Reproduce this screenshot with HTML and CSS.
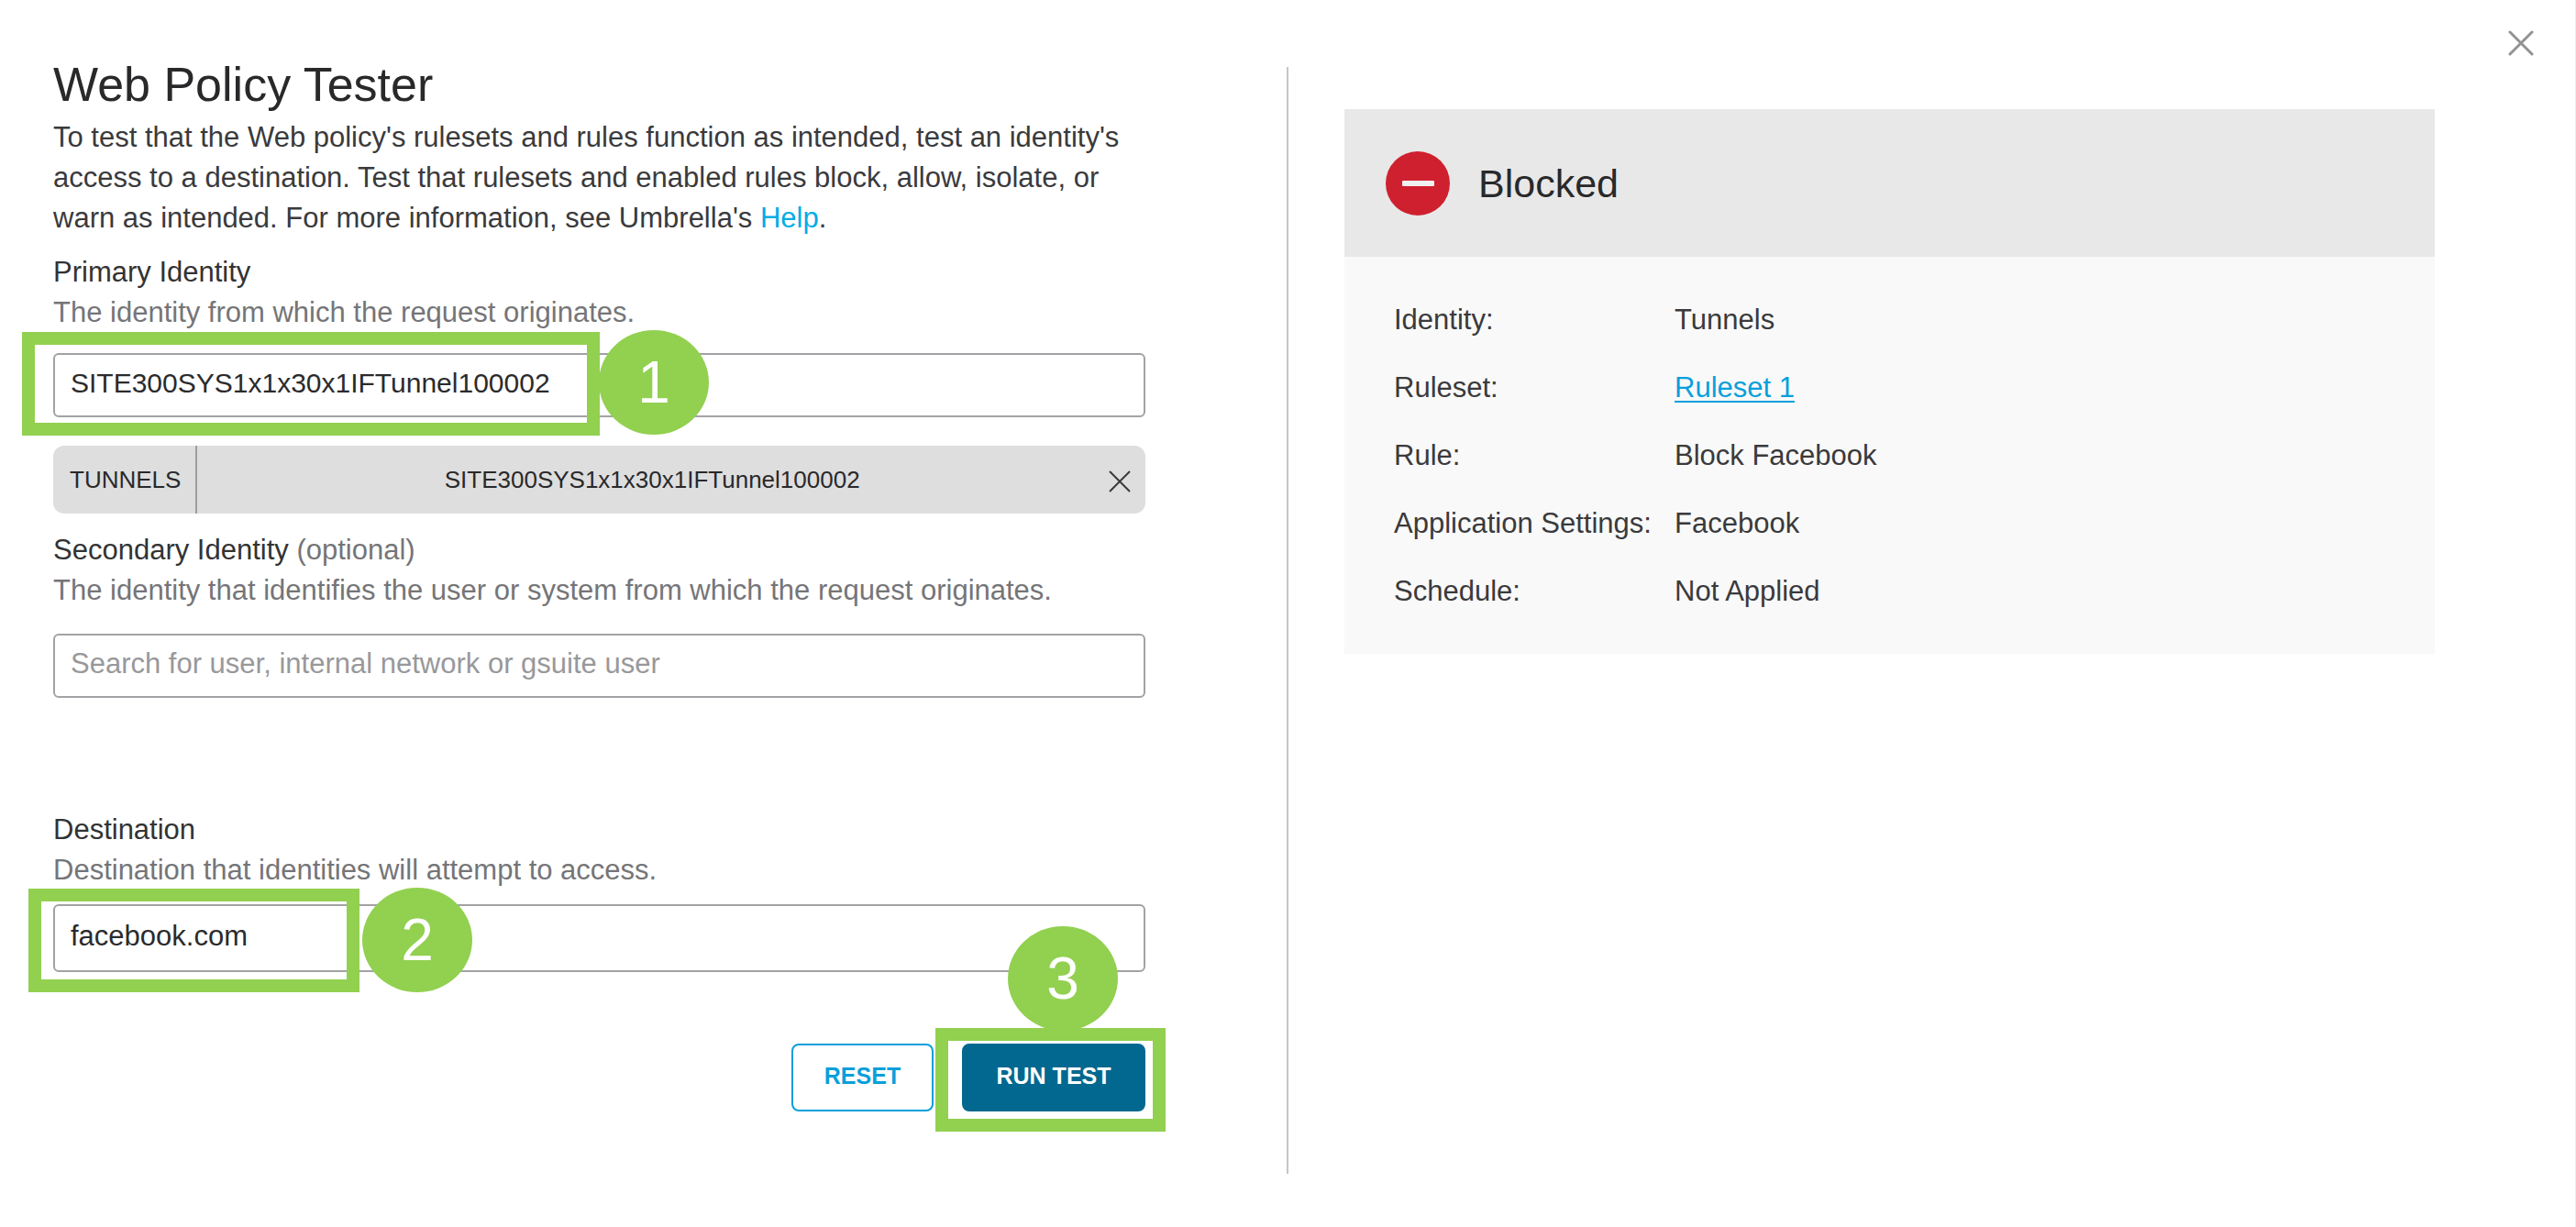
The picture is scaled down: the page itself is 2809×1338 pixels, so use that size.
FILE: index.html
```html
<!DOCTYPE html>
<html lang="en">
<head>
<meta charset="utf-8">
<meta name="viewport" content="width=device-width, initial-scale=1">
<title>Web Policy Tester</title>
<link rel="stylesheet" href="styles.css">
</head>
<body>
<main class="dialog">
  <form class="tester">
    <h1 class="title">Web Policy Tester</h1>
    <p class="intro">To test that the Web policy's rulesets and rules function as intended, test an identity's access to a destination. Test that rulesets and enabled rules block, allow, isolate, or warn as intended. For more information, see Umbrella's <a class="help-link" href="#help">Help</a>.</p>

    <div class="field">
      <label class="label" for="primary">Primary Identity</label>
      <p class="hint" id="primary-hint">The identity from which the request originates.</p>
      <div class="control">
        <input class="input input-identity" id="primary" type="text" value="SITE300SYS1x1x30x1IFTunnel100002" aria-describedby="primary-hint">
        <span class="outline outline-primary"></span>
        <span class="step step-primary">1</span>
      </div>
      <div class="chip">
        <span class="chip-type">TUNNELS</span>
        <span class="chip-name">SITE300SYS1x1x30x1IFTunnel100002</span>
        <button class="chip-remove" type="button" aria-label="Remove identity">
          <svg width="24" height="24" viewBox="0 0 24 24" fill="none" stroke="currentColor" stroke-width="2"><path d="M1 1l22 22M23 1L1 23"/></svg>
        </button>
      </div>
    </div>

    <div class="field field-secondary">
      <label class="label" for="secondary">Secondary Identity <span class="optional">(optional)</span></label>
      <p class="hint" id="secondary-hint">The identity that identifies the user or system from which the request originates.</p>
      <div class="control">
        <input class="input" id="secondary" type="text" placeholder="Search for user, internal network or gsuite user" aria-describedby="secondary-hint">
      </div>
    </div>

    <div class="field field-destination">
      <label class="label" for="destination">Destination</label>
      <p class="hint" id="destination-hint">Destination that identities will attempt to access.</p>
      <div class="control">
        <input class="input" id="destination" type="text" value="facebook.com" aria-describedby="destination-hint">
        <span class="outline outline-destination"></span>
        <span class="step step-destination">2</span>
      </div>
    </div>

    <div class="actions">
      <button class="button button-reset" type="button">RESET</button>
      <div class="run">
        <button class="button button-run" type="button">RUN TEST</button>
        <span class="outline outline-run"></span>
        <span class="step step-run">3</span>
      </div>
    </div>
  </form>

  <div class="divider"></div>

  <section class="result">
    <div class="card">
      <header class="card-header">
        <svg width="70" height="70" viewBox="0 0 70 70" aria-hidden="true"><circle cx="35" cy="35" r="35" fill="#cf202f"/><rect x="18" y="32" width="35" height="6" rx="1" fill="#f0f0f0"/></svg>
        <h2 class="status">Blocked</h2>
      </header>
      <dl class="details">
        <dt>Identity:</dt><dd>Tunnels</dd>
        <dt>Ruleset:</dt><dd><a class="ruleset-link" href="#ruleset-1">Ruleset 1</a></dd>
        <dt>Rule:</dt><dd>Block Facebook</dd>
        <dt>Application Settings:</dt><dd>Facebook</dd>
        <dt>Schedule:</dt><dd>Not Applied</dd>
      </dl>
    </div>
  </section>

  <button class="close" type="button" aria-label="Close">
    <svg width="28" height="28" viewBox="0 0 28 28" fill="none" stroke="currentColor" stroke-width="3" stroke-linecap="round"><path d="M2 2l24 24M26 2L2 26"/></svg>
  </button>
</main>
</body>
</html>
```
FILE: styles.css
```css
*, *::before, *::after { box-sizing: border-box; }

body {
  margin: 0;
  background: #fff;
  color: #3a3a3c;
  font: 31px/44px "Liberation Sans", Arial, sans-serif;
}

h1, h2, p, dl, dd { margin: 0; font-weight: 400; }

button, input { font-family: inherit; margin: 0; }
button { cursor: pointer; }

.dialog {
  position: relative;
  display: grid;
  grid-template-columns: 1fr 2px 1fr;
  min-height: 100vh;
  border-right: 1px solid #ececec;
}

.tester { padding: 62px 154px 62px 58px; }

.title {
  margin-bottom: 6px;
  color: #29292b;
  font-size: 52px;
  line-height: 60px;
}

.help-link { color: #00ade6; text-decoration: none; }

.field { margin-top: 15px; }
.field-secondary { margin-top: 18px; }
.field-destination { margin-top: 122px; }

.label { display: block; color: #333; }
.hint, .optional { color: #757578; }

.control { position: relative; margin-top: 22px; }
.field-secondary .control { margin-top: 25px; }
.field-destination .control { margin-top: 15px; }

.input {
  display: block;
  width: 100%;
  height: 70px;
  padding: 0 17px 4px;
  border: 2px solid #a2a2a6;
  border-radius: 6px;
  background: #fff;
  color: #2b2b2d;
  font-size: 31px;
}
.input::placeholder { color: #98989b; opacity: 1; }
.input-identity { font-size: 30px; }
.field-destination .input { height: 74px; }

.chip {
  display: flex;
  align-items: stretch;
  height: 74px;
  margin-top: 31px;
  border-radius: 12px;
  background: #dedede;
  color: #29292b;
  font-size: 26px;
  line-height: 74px;
}
.chip-type { padding: 0 16px 0 18px; border-right: 2px solid #9d9d9f; }
.chip-name { flex: 1; padding-left: 14px; text-align: center; }
.chip-remove {
  display: flex;
  align-items: center;
  padding: 4px 16px 0;
  border: 0;
  background: none;
  color: #3a3a3c;
}

.actions {
  display: flex;
  justify-content: flex-end;
  gap: 31px;
  margin-top: 78px;
}
.button {
  display: block;
  height: 74px;
  padding: 0 0 4px;
  border: 2px solid #0a9fdb;
  border-radius: 8px;
  background: #fff;
  color: #0a9fdb;
  font-size: 25px;
  font-weight: 700;
}
.button-reset { width: 155px; }
.button-run { width: 200px; border-color: #02688f; background: #02688f; color: #fff; }
.run { position: relative; }

/* Numbered walkthrough marks laid over the form controls */
.outline {
  position: absolute;
  height: 113px;
  border: 14px solid #92d050;
  pointer-events: none;
}
.step {
  position: absolute;
  width: 120px;
  height: 114px;
  border-radius: 50%;
  background: #92d050;
  color: #fff;
  font-size: 64px;
  line-height: 114px;
  text-align: center;
}
.outline-primary { left: -34px; top: -23px; width: 630px; }
.step-primary { left: 595px; top: -25px; }
.outline-destination { left: -27px; top: -17px; width: 361px; }
.step-destination { left: 337px; top: -18px; }
.outline-run { left: -29px; top: -17px; width: 251px; }
.step-run { left: 50px; top: -128px; }

.divider { margin: 73px 0 58px; background: #c6c6c8; }

.result { padding: 119px 153px 62px 61px; }
.card { background: #f9f9f9; }
.card-header {
  display: flex;
  align-items: center;
  gap: 31px;
  height: 161px;
  padding-left: 45px;
  background: #e8e8e8;
}
.status { color: #29292b; font-size: 43px; line-height: 60px; }

.details {
  display: grid;
  grid-template-columns: 306px 1fr;
  row-gap: 30px;
  padding: 47px 54px 46px;
}
.ruleset-link {
  color: #0a9fdb;
  text-decoration-thickness: 2px;
  text-underline-offset: 4px;
}

.close {
  position: absolute;
  top: 33px;
  right: 45px;
  display: flex;
  padding: 0;
  border: 0;
  background: none;
  color: #929292;
}
```
